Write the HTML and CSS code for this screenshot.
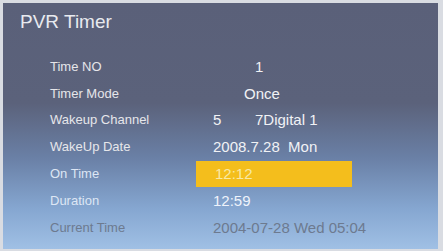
FILE: index.html
```html
<!DOCTYPE html>
<html>
<head>
<meta charset="utf-8">
<link rel="stylesheet" href="styles.css">
</head>
<body>
<div class="screen">
  <div class="title">PVR Timer</div>
  <div class="rows">
    <div class="row"><span class="label">Time NO</span><span class="value v-no">1</span></div>
    <div class="row"><span class="label">Timer Mode</span><span class="value v-mode">Once</span></div>
    <div class="row"><span class="label">Wakeup Channel</span><span class="value"><span class="ch-num">5</span><span>7Digital 1</span></span></div>
    <div class="row"><span class="label">WakeUp Date</span><span class="value">2008.7.28&nbsp; Mon</span></div>
    <div class="row"><span class="label light">On Time</span><span class="value selected">12:12</span></div>
    <div class="row"><span class="label light">Duration</span><span class="value bright">12:59</span></div>
    <div class="row dim"><span class="label">Current Time</span><span class="value">2004-07-28 Wed 05:04</span></div>
  </div>
</div>
</body>
</html>
```
FILE: styles.css
```css
html, body {
  margin: 0;
  padding: 0;
}
body {
  width: 443px;
  height: 251px;
  background: #d9dce2;
  font-family: "Liberation Sans", Arial, sans-serif;
  box-sizing: border-box;
  padding: 3px 5px 2px 3px;
  overflow: hidden;
}
.screen {
  height: 100%;
  background: linear-gradient(to bottom, #5a6079 0px, #5b627b 100px, #6a80a6 155px, #85a6d0 205px, #a0c0e5 246px);
  box-sizing: border-box;
  padding: 7px 0 0 17px;
}
.title {
  font-size: 19px;
  color: #e8eaef;
  line-height: 24px;
  height: 43px;
}
.rows {
  display: flex;
  flex-direction: column;
}
.row {
  display: flex;
  align-items: center;
  height: 26.8px;
}
.label {
  width: 146px;
  padding-left: 30px;
  font-size: 13px;
  color: #e6e6ea;
  flex: none;
}
.label.light {
  color: #dde6f4;
}
.value {
  font-size: 15px;
  color: #f1f2f5;
  padding-left: 17px;
  display: flex;
}
.v-no { padding-left: 59px; }
.v-mode { padding-left: 48px; }
.ch-num { width: 42px; }
.selected {
  background: #f4be1c;
  color: #f8e9a6;
  width: 156px;
  box-sizing: border-box;
  padding-left: 19px;
  height: 26px;
  align-items: center;
}
.bright { color: #eef3fb; }
.dim .label, .dim .value {
  color: #6d7a8f;
}
```
